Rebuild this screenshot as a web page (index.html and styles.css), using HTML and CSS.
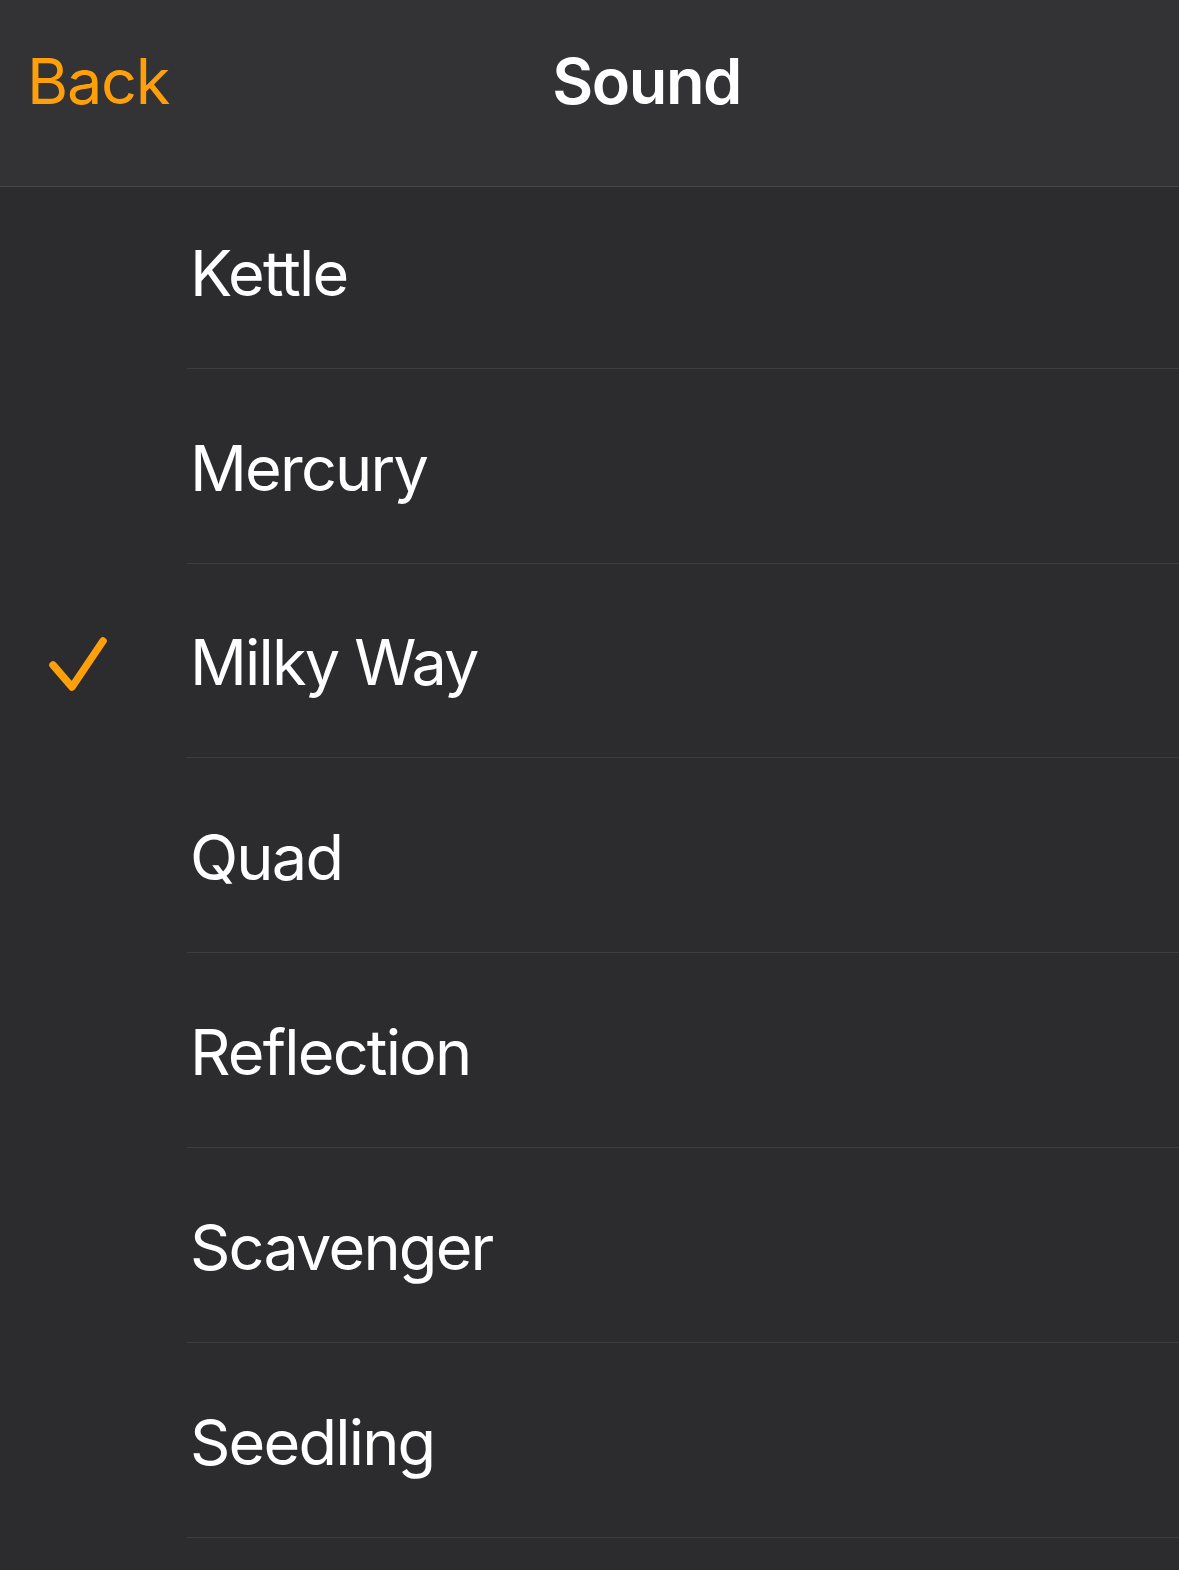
FILE: index.html
```html
<!DOCTYPE html>
<html>
  <head>
    <title>Sound</title>
    <meta charset="utf-8">
    <meta name="viewport" content="width=device-width, initial-scale=1">
    <link rel="stylesheet" href="styles.css">
  </head>
  <body>
    <header class="navbar">
      <a class="back" href="#">Back</a>
      <h1 class="title">Sound</h1>
    </header>

    <ul class="sounds">
      <li class="sound">Kettle</li>
      <li class="sound">Mercury</li>
      <li class="sound selected">
        <svg class="check" width="60" height="60" viewBox="0 0 60 60">
          <path d="M5 30 L24 52 L55 6" fill="none" stroke="#ff9f0a" stroke-width="7.5" stroke-linecap="round" stroke-linejoin="round"/>
        </svg>
        Milky Way
      </li>
      <li class="sound">Quad</li>
      <li class="sound">Reflection</li>
      <li class="sound">Scavenger</li>
      <li class="sound">Seedling</li>
      <li class="sound"></li>
    </ul>
  </body>
</html>
```

FILE: styles.css
```css
html, body {
  margin: 0;
  padding: 0;
}
body {
  background-color: #2c2c2e;
  color: #fff;
  font-family: Inter, "Noto Sans", sans-serif;
  height: 1570px;
  overflow: hidden;
}
.navbar {
  position: relative;
  z-index: 1;
  display: flex;
  align-items: center;
  height: 186px;
  padding: 0 438px 0 27px;
  background-color: #333335;
  border-bottom: 1px solid #48484a;
}
.back {
  color: #ff9f0a;
  text-decoration: none;
  font-size: 63px;
  letter-spacing: -1.3px;
  margin-top: -25px;
}
.title {
  margin: -25px 0 0 auto;
  font-size: 63px;
  font-weight: 600;
  letter-spacing: -1.4px;
}
.sounds {
  list-style: none;
  margin: -13px 0 0 0;
  padding: 0;
}
.sound {
  position: relative;
  display: flex;
  align-items: center;
  height: 194.8px;
  margin-left: 187px;
  padding-left: 3px;
  padding-top: 4px;
  box-sizing: border-box;
  border-bottom: 1px solid #3d3d3f;
  font-size: 63px;
  letter-spacing: -1.8px;
}
.check {
  position: absolute;
  left: -139px;
  top: 71px;
}
```
